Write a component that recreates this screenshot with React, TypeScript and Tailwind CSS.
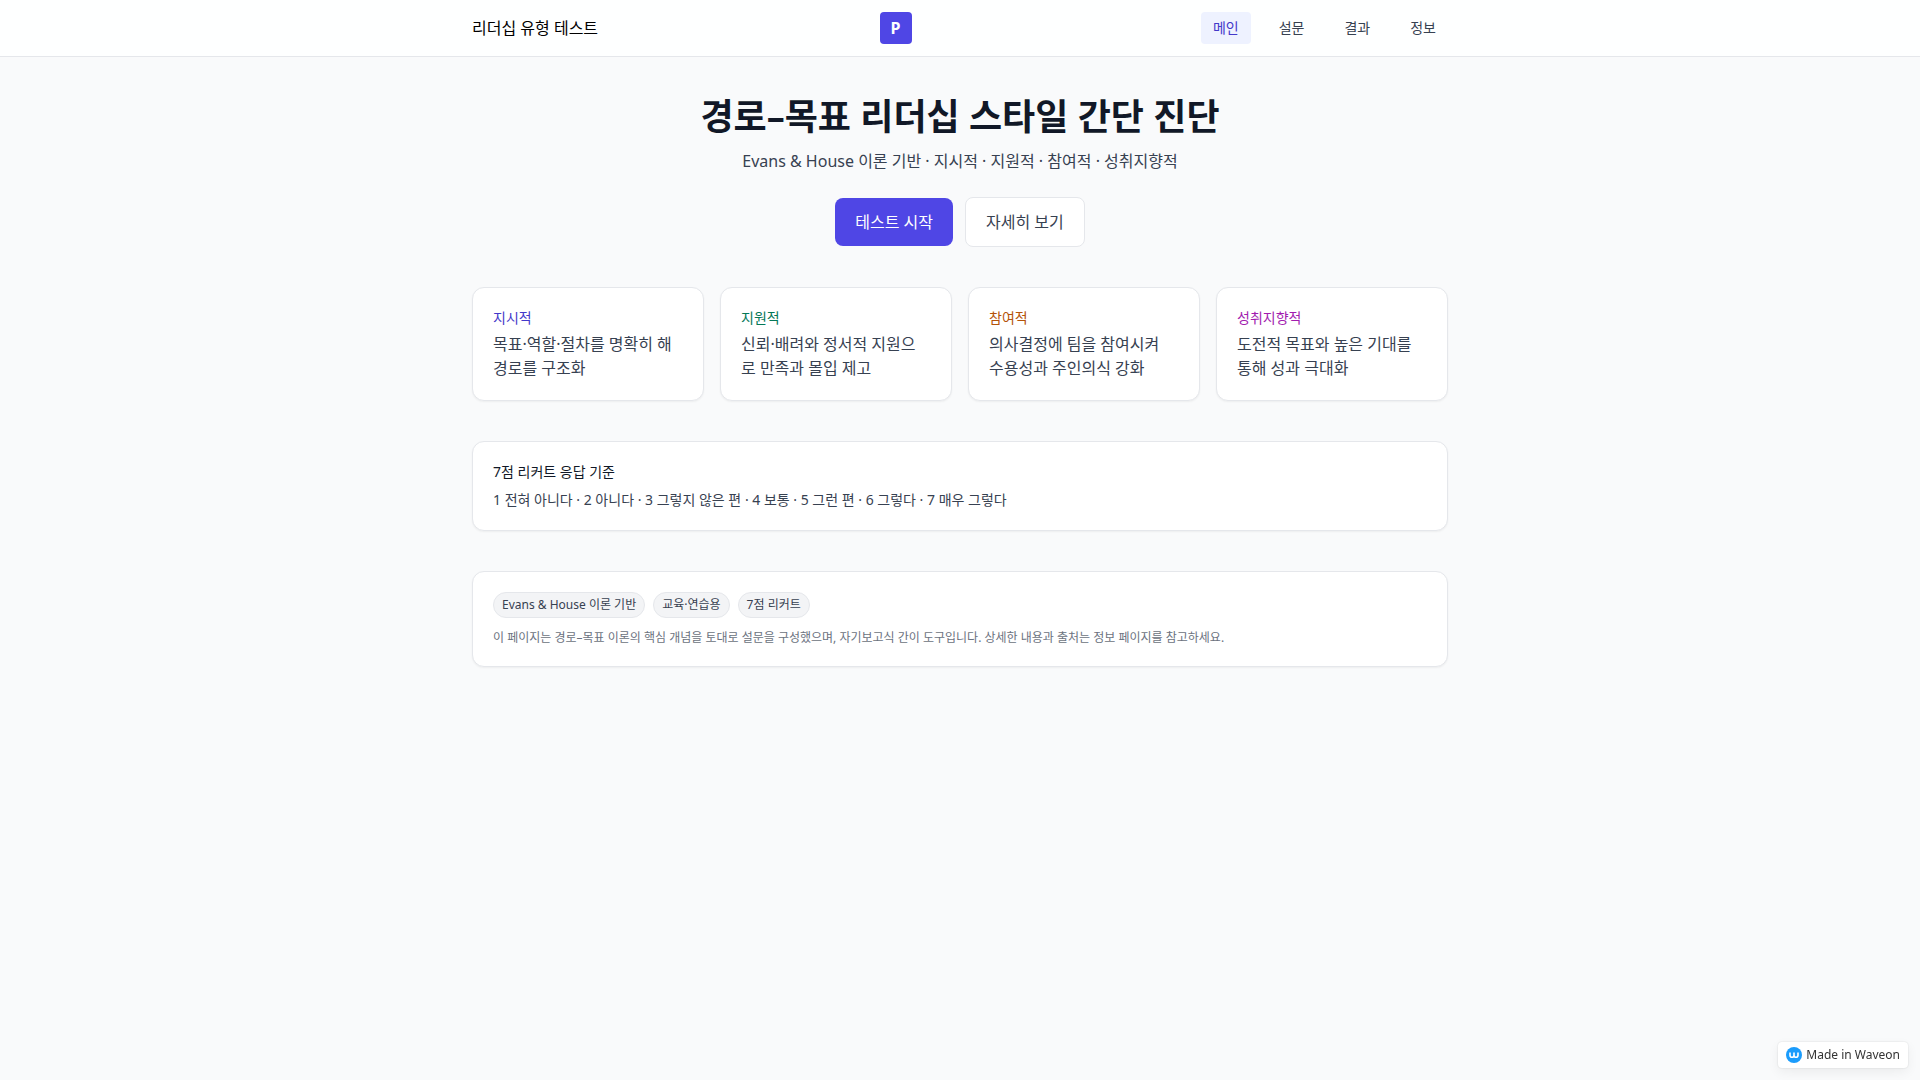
const navLinks = [
  { label: "메인", href: "#main", active: true },
  { label: "설문", href: "#survey", active: false },
  { label: "결과", href: "#result", active: false },
  { label: "정보", href: "#info", active: false },
];

const styles = [
  {
    name: "지시적",
    color: "text-[#4338ca]",
    text: "목표·역할·절차를 명확히 해\n경로를 구조화",
  },
  {
    name: "지원적",
    color: "text-[#047857]",
    text: "신뢰·배려와 정서적 지원으\n로 만족과 몰입 제고",
  },
  {
    name: "참여적",
    color: "text-[#b45309]",
    text: "의사결정에 팀을 참여시켜\n수용성과 주인의식 강화",
  },
  {
    name: "성취지향적",
    color: "text-[#a21caf]",
    text: "도전적 목표와 높은 기대를\n통해 성과 극대화",
  },
];

const tags = ["Evans & House 이론 기반", "교육·연습용", "7점 리커트"];

const Header = () => {
  return (
    <header className="border-b border-[#e5e7eb] bg-white/90">
      <div className="mx-auto flex h-14 max-w-5xl items-center justify-between px-6">
        <a href="#main" className="text-black">
          리더십 유형 테스트
        </a>
        <div className="flex h-8 w-8 items-center justify-center rounded bg-[#4f46e5] font-bold text-white">
          P
        </div>
        <nav className="flex gap-4 pl-2 text-sm">
          {navLinks.map((link) => (
            <a
              key={link.label}
              href={link.href}
              className={
                link.active
                  ? "rounded bg-[#eef2ff] px-3 py-1.5 text-[#4338ca]"
                  : "rounded px-3 py-1.5 text-[#374151]"
              }
            >
              {link.label}
            </a>
          ))}
        </nav>
      </div>
    </header>
  );
};

const App = () => {
  return (
    <div className="min-h-screen bg-[#f9fafb] font-['Noto_Sans','Noto_Sans_CJK_KR',sans-serif] text-[#111827]">
      <Header />

      <main className="mx-auto max-w-5xl px-6 py-10">
        <section className="text-center">
          <h1 className="text-4xl font-bold">경로–목표 리더십 스타일 간단 진단</h1>
          <p className="mt-3 text-[#374151]">
            Evans &amp; House 이론 기반 · 지시적 · 지원적 · 참여적 · 성취지향적
          </p>
          <div className="mt-6 flex items-center justify-center gap-3">
            <button className="rounded-lg bg-[#4f46e5] px-5 py-3 text-white">
              테스트 시작
            </button>
            <button className="rounded-lg border border-[#e5e7eb] bg-white px-5 py-3 text-[#374151]">
              자세히 보기
            </button>
          </div>
        </section>

        <section className="mt-10 grid grid-cols-2 gap-4 lg:grid-cols-4">
          {styles.map((style) => (
            <div
              key={style.name}
              className="rounded-xl border border-[#e5e7eb] bg-white p-5 shadow-xs"
            >
              <div className={`text-sm ${style.color}`}>{style.name}</div>
              <p className="mt-1 whitespace-pre-line text-[#374151]">{style.text}</p>
            </div>
          ))}
        </section>

        <section className="mt-10 rounded-xl border border-[#e5e7eb] bg-white p-5 text-sm shadow-xs">
          <h2>7점 리커트 응답 기준</h2>
          <p className="mt-2 text-[#374151]">
            1 전혀 아니다 · 2 아니다 · 3 그렇지 않은 편 · 4 보통 · 5 그런 편 · 6 그렇다 · 7 매우 그렇다
          </p>
        </section>

        <section className="mt-10 rounded-xl border border-[#e5e7eb] bg-white p-5 text-xs shadow-xs">
          <div className="flex flex-wrap gap-2">
            {tags.map((tag) => (
              <span
                key={tag}
                className="rounded-full border border-[#e5e7eb] bg-[#f3f4f6] px-2 py-1 text-[#374151]"
              >
                {tag}
              </span>
            ))}
          </div>
          <p className="mt-3 text-[#6b7280]">
            이 페이지는 경로–목표 이론의 핵심 개념을 토대로 설문을 구성했으며, 자기보고식 간이 도구입니다. 상세한 내용과 출처는 정보 페이지를 참고하세요.
          </p>
        </section>
      </main>

      <a
        href="#waveon"
        className="fixed right-3 bottom-3 flex items-center gap-1 rounded bg-white px-2 py-[5px] text-xs text-[#333333] shadow-[0_0_2px_rgba(0,0,0,0.15),0_4px_12px_rgba(0,0,0,0.06)]"
      >
        <svg className="h-4 w-4" viewBox="0 0 16 16" fill="none">
          <circle cx="8" cy="8" r="8" fill="#1b9cfc" />
          <path
            d="M4 5.5v2.700a2 2 0 0 0 4 0V5.500v2.700a2 2 0 0 0 4 0V5.500"
            stroke="#ffffff"
            strokeWidth="1.6"
          />
        </svg>
        Made in Waveon
      </a>
    </div>
  );
};

export default App;
